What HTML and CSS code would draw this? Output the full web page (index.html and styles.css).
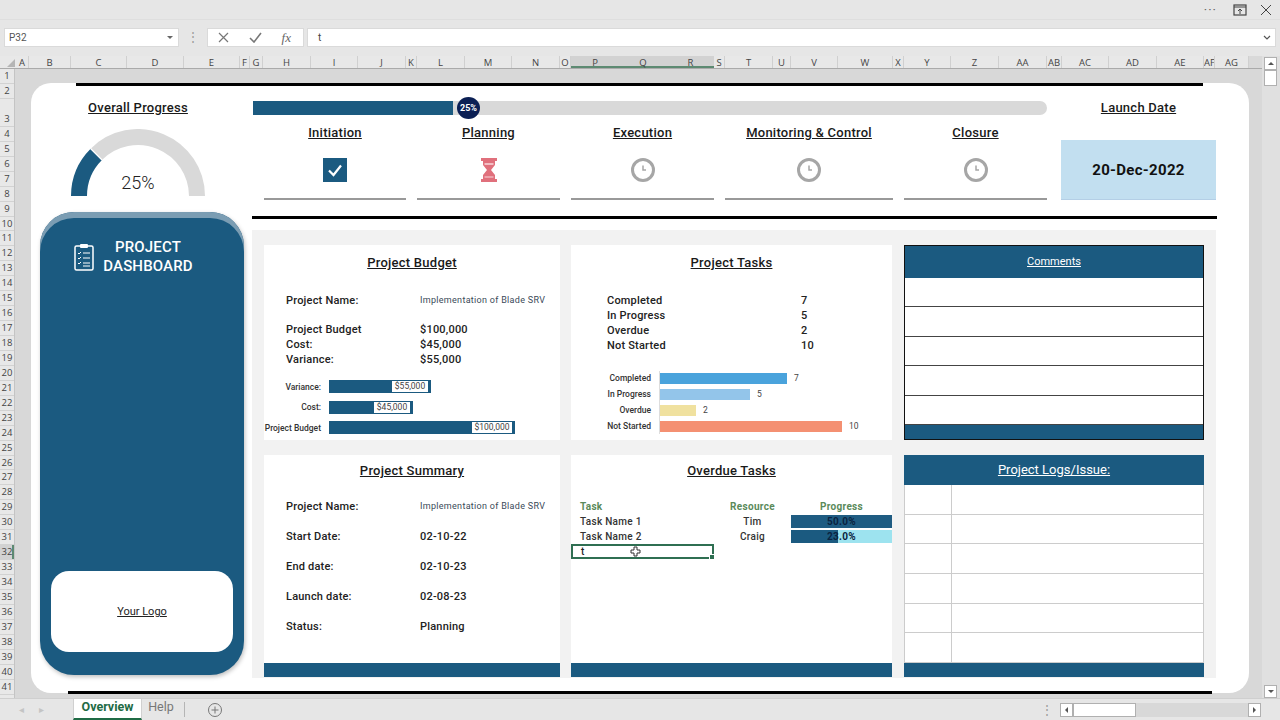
FILE: index.html
```html
<!DOCTYPE html>
<html lang="en">
<head>
    <meta charset="UTF-8">
    <title>Project Dashboard</title>
    <link rel="stylesheet" href="styles.css">
</head>
<body>
    <div class="titlebar">
        <span class="dots">&middot;&middot;&middot;</span>
        <svg class="win-icon" width="14" height="12" viewBox="0 0 14 12"><rect x="1" y="1" width="12" height="10" fill="none" stroke="#444" stroke-width="1.2"/><path d="M1 3h12M7 5v5M5 7l2-2 2 2" fill="none" stroke="#444"/></svg>
        <svg class="win-icon" width="12" height="12" viewBox="0 0 12 12"><path d="M1 1l10 10M11 1L1 11" stroke="#444" fill="none"/></svg>
    </div>

    <div class="formula">
        <div class="namebox"><span>P32</span><i class="caret"></i></div>
        <span class="grip">&#8942;</span>
        <div class="fx-group">
            <svg width="11" height="11" viewBox="0 0 11 11"><path d="M1 1l9 9M10 1l-9 9" stroke="#777" stroke-width="1.2" fill="none"/></svg>
            <svg width="13" height="11" viewBox="0 0 13 11"><path d="M1 6l4 4 7-9" stroke="#777" stroke-width="1.6" fill="none"/></svg>
            <span class="fx">fx</span>
        </div>
        <div class="formula-input"><span>t</span><svg width="8" height="5" viewBox="0 0 8 5"><path d="M1 1l3 3 3-3" stroke="#555" stroke-width="1.2" fill="none"/></svg></div>
    </div>

    <div class="main">
        <div class="grid-area">
            <div class="colhead">
                <span class="corner"></span>
                <span>A</span><span>B</span><span>C</span><span>D</span><span>E</span><span>F</span><span>G</span><span>H</span><span>I</span><span>J</span><span>K</span><span>L</span><span>M</span><span>N</span><span>O</span>
                <span class="sel">P</span><span class="sel">Q</span><span class="sel">R</span>
                <span>S</span><span>T</span><span>U</span><span>V</span><span>W</span><span>X</span><span>Y</span><span>Z</span><span>AA</span><span>AB</span><span>AC</span><span>AD</span><span>AE</span><span>AF</span><span>AG</span>
                <span class="colfill"></span>
            </div>
            <div class="sheet">
                <div class="rowhead">
                    <span>1</span><span>2</span><span class="tall">3</span><span>4</span><span>5</span><span>6</span><span>7</span><span>8</span><span>9</span><span>10</span>
                    <span>11</span><span>12</span><span>13</span><span>14</span><span>15</span><span>16</span><span>17</span><span>18</span><span>19</span><span>20</span>
                    <span>21</span><span>22</span><span>23</span><span>24</span><span>25</span><span>26</span><span>27</span><span>28</span><span>29</span><span>30</span>
                    <span>31</span><span class="sel">32</span><span>33</span><span>34</span><span>35</span><span>36</span><span>37</span><span>38</span><span>39</span><span>40</span>
                    <span>41</span>
                </div>
                <div class="gutter">
                    <div class="card">
                        <div class="rule-top"></div>
                        <div class="board">
                            <div class="left">
                                <div class="heading overall">Overall Progress</div>
                                <svg class="gauge" width="136" height="68" viewBox="0 0 136 68">
                                    <path d="M26.3 25.3A59 59 0 0 1 127 67" fill="none" stroke="#d9d9d9" stroke-width="16"/>
                                    <path d="M9 67A59 59 0 0 1 26.3 25.3" fill="none" stroke="#1b5a80" stroke-width="16"/>
                                    <path d="M20.5 19.5L32 31" stroke="#fff" stroke-width="1.2"/>
                                    <text x="68" y="60" text-anchor="middle" class="gauge-text">25%</text>
                                </svg>
                                <div class="side">
                                    <div class="side-head">
                                        <svg width="20" height="28" viewBox="0 0 20 28"><rect x="1" y="3" width="18" height="24" rx="1.5" fill="none" stroke="#fff" stroke-width="1.5"/><rect x="6" y="1" width="8" height="4" rx="1" fill="#fff"/><path d="M4 10l1 1 2-2M4 15l1 1 2-2M4 20l1 1 2-2M9 10h7M9 15h7M9 20h7M9 23h7" stroke="#fff" fill="none"/></svg>
                                        <div class="side-title">PROJECT<br>DASHBOARD</div>
                                    </div>
                                    <div class="logo-box"><u>Your Logo</u></div>
                                </div>
                            </div>

                            <div class="right">
                                <div class="top">
                                    <div class="phases">
                                        <div class="track">
                                            <div class="track-fill" style="width:200px"></div>
                                            <span class="knob">25%</span>
                                        </div>
                                        <div class="stages">
                                            <div class="stage">
                                                <div class="heading">Initiation</div>
                                                <svg class="stage-icon" width="24" height="24" viewBox="0 0 24 24"><rect width="24" height="24" fill="#1b5a80"/><path d="M6 12.5l4.5 4.5L18 7.5" stroke="#fff" stroke-width="2.2" fill="none"/></svg>
                                            </div>
                                            <div class="stage">
                                                <div class="heading">Planning</div>
                                                <svg class="stage-icon" width="18" height="24" viewBox="0 0 18 24"><path d="M1 1.5h16M1 22.5h16" stroke="#e0707c" stroke-width="3"/><path d="M3 3h12v4l-4 5 4 5v4H3v-4l4-5-4-5z" fill="#e0707c"/><path d="M4.5 6h9" stroke="#f8d8dc" stroke-width="1.5"/><path d="M4.5 19h9" stroke="#f8d8dc"/></svg>
                                            </div>
                                            <div class="stage">
                                                <div class="heading">Execution</div>
                                                <svg class="stage-icon" width="24" height="24" viewBox="0 0 24 24"><circle cx="12" cy="12" r="10.5" fill="#fff" stroke="#a6a6a6" stroke-width="3"/><path d="M12 7.5v4.500h3" stroke="#a6a6a6" stroke-width="1.5" fill="none"/></svg>
                                            </div>
                                            <div class="stage">
                                                <div class="heading">Monitoring &amp; Control</div>
                                                <svg class="stage-icon" width="24" height="24" viewBox="0 0 24 24"><circle cx="12" cy="12" r="10.5" fill="#fff" stroke="#a6a6a6" stroke-width="3"/><path d="M12 7.5v4.500h3" stroke="#a6a6a6" stroke-width="1.5" fill="none"/></svg>
                                            </div>
                                            <div class="stage">
                                                <div class="heading">Closure</div>
                                                <svg class="stage-icon" width="24" height="24" viewBox="0 0 24 24"><circle cx="12" cy="12" r="10.5" fill="#fff" stroke="#a6a6a6" stroke-width="3"/><path d="M12 7.5v4.500h3" stroke="#a6a6a6" stroke-width="1.5" fill="none"/></svg>
                                            </div>
                                        </div>
                                    </div>
                                    <div class="launch">
                                        <div class="heading">Launch Date</div>
                                        <div class="launch-date">20-Dec-2022</div>
                                    </div>
                                </div>
                                <div class="rule-mid"></div>

                                <div class="panel">
                                    <div class="box">
                                        <div class="heading">Project Budget</div>
                                        <div class="info budget-info">
                                            <span>Project Name:</span><span class="small">Implementation of Blade SRV</span>
                                        </div>
                                        <div class="info budget-info gap-top">
                                            <span>Project Budget</span><span>$100,000</span>
                                            <span>Cost:</span><span>$45,000</span>
                                            <span>Variance:</span><span>$55,000</span>
                                        </div>
                                        <div class="money-chart">
                                            <div class="money-row"><span class="chart-label">Variance:</span><div class="money-bar" style="width:102px"><span class="money-val">$55,000</span></div></div>
                                            <div class="money-row"><span class="chart-label">Cost:</span><div class="money-bar" style="width:84px"><span class="money-val">$45,000</span></div></div>
                                            <div class="money-row"><span class="chart-label">Project Budget</span><div class="money-bar" style="width:186px"><span class="money-val wide">$100,000</span></div></div>
                                        </div>
                                    </div>

                                    <div class="box">
                                        <div class="heading">Project Tasks</div>
                                        <div class="info tasks-info">
                                            <span>Completed</span><span>7</span>
                                            <span>In Progress</span><span>5</span>
                                            <span>Overdue</span><span>2</span>
                                            <span>Not Started</span><span>10</span>
                                        </div>
                                        <div class="task-chart">
                                            <div class="task-row"><span class="chart-label">Completed</span><div class="task-track"><i class="c-done" style="width:127px"></i><span>7</span></div></div>
                                            <div class="task-row"><span class="chart-label">In Progress</span><div class="task-track"><i class="c-prog" style="width:90px"></i><span>5</span></div></div>
                                            <div class="task-row"><span class="chart-label">Overdue</span><div class="task-track"><i class="c-over" style="width:36px"></i><span>2</span></div></div>
                                            <div class="task-row"><span class="chart-label">Not Started</span><div class="task-track"><i class="c-none" style="width:182px"></i><span>10</span></div></div>
                                        </div>
                                    </div>

                                    <div class="box comments">
                                        <div class="comments-head"><u>Comments</u></div>
                                        <div class="comment-line"></div>
                                        <div class="comment-line"></div>
                                        <div class="comment-line"></div>
                                        <div class="comment-line"></div>
                                        <div class="comment-line"></div>
                                        <div class="foot"></div>
                                    </div>

                                    <div class="box lower">
                                        <div class="heading">Project Summary</div>
                                        <div class="info summary-info">
                                            <span>Project Name:</span><span class="small">Implementation of Blade SRV</span>
                                            <span>Start Date:</span><span>02-10-22</span>
                                            <span>End date:</span><span>02-10-23</span>
                                            <span>Launch date:</span><span>02-08-23</span>
                                            <span>Status:</span><span>Planning</span>
                                        </div>
                                        <div class="foot"></div>
                                    </div>

                                    <div class="box lower">
                                        <div class="heading">Overdue Tasks</div>
                                        <div class="overdue">
                                            <span class="th task-col">Task</span><span class="th mid-col">Resource</span><span class="th mid-col">Progress</span>
                                            <span class="td task-col">Task Name 1</span><span class="td mid-col">Tim</span>
                                            <div class="pbar full"><span>50.0%</span></div>
                                            <span class="td task-col">Task Name 2</span><span class="td mid-col">Craig</span>
                                            <div class="pbar"><i style="width:47%"></i><span>23.0%</span></div>
                                            <div class="cell-sel">t
                                                <svg class="cross" width="11" height="11" viewBox="0 0 11 11"><path d="M4 1h3v3h3v3H7v3H4V7H1V4h3z" fill="#fff" stroke="#333"/></svg>
                                            </div>
                                        </div>
                                        <div class="foot"></div>
                                    </div>

                                    <div class="box lower logs">
                                        <div class="logs-head"><u>Project Logs/Issue:</u></div>
                                        <div class="log-line"><i></i></div>
                                        <div class="log-line"><i></i></div>
                                        <div class="log-line"><i></i></div>
                                        <div class="log-line"><i></i></div>
                                        <div class="log-line"><i></i></div>
                                        <div class="log-line"><i></i></div>
                                        <div class="foot"></div>
                                    </div>
                                </div>
                            </div>
                        </div>
                        <div class="rule-bottom"></div>
                    </div>
                </div>
            </div>
        </div>
        <div class="vscroll">
            <span class="sb-btn"><i class="tri-up"></i></span>
            <span class="sb-thumb"></span>
            <span class="sb-btn low"><i class="tri-down"></i></span>
        </div>
    </div>

    <div class="tabs">
        <span class="tab-arrow">&#9666;</span>
        <span class="tab-arrow">&#9656;</span>
        <span class="tab active">Overview</span>
        <span class="tab">Help</span>
        <span class="tab-sep"></span>
        <svg class="tab-add" width="16" height="16" viewBox="0 0 16 16"><circle cx="8" cy="8" r="6.5" fill="none" stroke="#777"/><path d="M8 4.5v7M4.5 8h7" stroke="#777"/></svg>
        <span class="tab-grip">&#8942;</span>
        <div class="hscroll">
            <span class="sb-btn"><i class="tri-left"></i></span>
            <span class="h-thumb"></span>
            <span class="h-track"></span>
            <span class="sb-btn"><i class="tri-right"></i></span>
        </div>
    </div>
</body>
</html>
```

FILE: styles.css
```css
* {
    box-sizing: border-box;
}
body {
    margin: 0;
    width: 1280px;
    height: 720px;
    overflow: hidden;
    background: #e6e6e6;
    font-family: Roboto, "Liberation Sans", sans-serif;
    color: #222;
}

/* window chrome */
.titlebar {
    height: 19px;
    display: flex;
    align-items: center;
    justify-content: flex-end;
    gap: 13px;
    padding-right: 8px;
}
.dots {
    font-size: 13px;
    color: #666;
    letter-spacing: 1px;
    margin-right: 3px;
}
.formula {
    height: 37px;
    padding: 8px 4px 0;
    display: flex;
    align-items: flex-start;
    border-top: 1px solid #dedede;
}
.namebox {
    width: 175px;
    height: 19px;
    background: #fff;
    border: 1px solid #dadada;
    display: flex;
    align-items: center;
    justify-content: space-between;
    padding: 0 5px 0 4px;
    font-size: 10px;
    color: #555;
}
.caret {
    border: 3px solid transparent;
    border-top-color: #666;
    border-bottom: 0;
}
.grip {
    width: 28px;
    text-align: center;
    color: #999;
    font-size: 12px;
    line-height: 19px;
}
.fx-group {
    width: 97px;
    height: 19px;
    background: #fff;
    border: 1px solid #dadada;
    display: flex;
    align-items: center;
    justify-content: space-between;
    padding: 0 12px 0 10px;
}
.fx {
    font-family: "Liberation Serif", serif;
    font-style: italic;
    font-size: 13px;
    color: #666;
}
.formula-input {
    flex: 1;
    height: 19px;
    margin-left: 3px;
    background: #fff;
    border: 1px solid #dadada;
    display: flex;
    align-items: center;
    justify-content: space-between;
    padding: 0 4px 0 10px;
    font-size: 10px;
    color: #444;
}

.main {
    height: 642px;
    display: flex;
}
.grid-area {
    width: 1262px;
}
.colhead {
    height: 13px;
    display: grid;
    grid-template-columns: 16px 13px 42px 56px 57px 56px 10px 13px 48px 47px 48px 11px 48px 47px 48px 11px 48px 48px 47px 11px 48px 18px 47px 55px 11px 47px 48px 48px 15px 47px 48px 47px 11px 34px 13px;
    border-bottom: 1px solid #aaa;
    background: #e8e8e8;
    font-family: "Open Sans", sans-serif;
    font-size: 9.5px;
    color: #444;
}
.colhead span {
    text-align: center;
    line-height: 13px;
    overflow: hidden;
    border-right: 1px solid #d0d0d0;
}
.colhead .sel {
    background: #d2d2d2;
    border-right: 0;
    box-shadow: inset 0 -2px 0 #5d8a72;
}
.colhead .corner {
    border: 0;
    position: relative;
}
.corner::after {
    content: "";
    position: absolute;
    right: 1px;
    bottom: 1px;
    border: 4px solid transparent;
    border-right-color: #b5b5b5;
    border-bottom-color: #b5b5b5;
}
.colhead .colfill {
    border: 0;
    background: #d9d9d9;
}
.sheet {
    height: 629px;
    display: flex;
    overflow: hidden;
}
.rowhead {
    width: 15px;
    flex: none;
    font-family: "Open Sans", sans-serif;
    font-size: 9.5px;
    color: #444;
    background: #e8e8e8;
    border-right: 1px solid #c4c4c4;
}
.rowhead span {
    display: block;
    height: 14.95px;
    line-height: 14.5px;
    text-align: center;
    border-bottom: 1px solid #d2d2d2;
}
.rowhead .tall {
    height: 28px;
    line-height: 39px;
}
.rowhead .sel {
    background: #d2d2d2;
    box-shadow: inset -2px 0 0 #5d8a72;
}
.gutter {
    flex: 1;
    background: #d8d8d8;
    padding: 14px 13px 0 16px;
    border-right: 1px solid #bbb;
}

/* the dashboard itself */
.card {
    width: 1218px;
    height: 610px;
    background: #fff;
    border-radius: 20px;
}
.rule-top {
    height: 3px;
    margin: 0 46px 0 45px;
    background: #000;
}
.rule-bottom {
    height: 3px;
    margin: 0 37px;
    background: #000;
}
.board {
    height: 605px;
    padding-left: 9px;
    display: flex;
    gap: 8px;
}
.heading {
    padding-top: 1px;
    font-size: 13px;
    font-weight: 500;
    line-height: 18px;
    letter-spacing: 0.25px;
    text-align: center;
    text-decoration: underline;
    color: #1a1a1a;
}
.lower .heading {
    padding-top: 0;
}
.left {
    width: 204px;
}
.overall {
    margin-top: 12px;
    padding-right: 8px;
}
.gauge {
    display: block;
    margin: 12px 0 0 30px;
}
.gauge-text {
    font-size: 18px;
    font-weight: 300;
    fill: #222;
}
.side {
    margin-top: 15px;
    height: 463px;
    background: #1b5a80;
    border-radius: 34px;
    box-shadow: inset 0 6px 0 #7b9db3, 1px 2px 4px rgba(0,0,0,0.25);
    display: flex;
    flex-direction: column;
}
.side-head {
    padding: 26px 0 0 34px;
    display: flex;
    align-items: center;
    gap: 8px;
}
.side-title {
    width: 92px;
    color: #fff;
    text-align: center;
    font-size: 15px;
    font-weight: 500;
    line-height: 18.5px;
    letter-spacing: 0.15px;
}
.logo-box {
    margin: auto 11px 23px;
    height: 81px;
    background: #fff;
    border-radius: 18px;
    display: flex;
    align-items: center;
    justify-content: center;
    font-size: 11px;
}

.right {
    width: 965px;
}
.top {
    display: grid;
    grid-template-columns: 795px 155px;
    column-gap: 14px;
}
.phases {
    padding-top: 15px;
}
.track {
    position: relative;
    height: 14px;
    margin-left: 1px;
    background: #d9d9d9;
    border-radius: 0 7px 7px 0;
}
.track-fill {
    height: 14px;
    background: #1b5a80;
}
.knob {
    position: absolute;
    left: 204px;
    top: -4px;
    width: 23px;
    height: 22px;
    border-radius: 50%;
    background: #0b1f54;
    color: #fff;
    font-size: 9px;
    font-weight: 700;
    line-height: 22px;
    text-align: center;
}
.stages {
    margin-top: 8px;
    padding-left: 12px;
    display: grid;
    grid-template-columns: 142px 143px 143px 168px 143px;
    column-gap: 11px;
}
.stage {
    height: 77px;
    border-bottom: 2px solid #999;
    text-align: center;
}
.stage-icon {
    display: block;
    margin: 16px auto 0;
}
.launch {
    padding-top: 12px;
}
.launch-date {
    margin-top: 23px;
    height: 60px;
    background: #c2dff0;
    border-bottom: 1px solid #b4cfe6;
    font-size: 15px;
    font-weight: 700;
    letter-spacing: 0.3px;
    line-height: 60px;
    text-align: center;
    color: #111;
}
.rule-mid {
    height: 3px;
    margin-top: 16px;
    background: #000;
}
.panel {
    width: 964px;
    height: 448px;
    margin-top: 11px;
    padding: 15px 0 0 12px;
    background: #f2f2f2;
    display: grid;
    grid-template-columns: 296px 321px 301px;
    grid-template-rows: 195px 222px;
    column-gap: 11px;
    row-gap: 15px;
}
.box {
    background: #fff;
    padding-top: 8px;
    display: flex;
    flex-direction: column;
}
.box.lower {
    padding-top: 7px;
}
.info {
    display: grid;
    font-size: 11px;
    font-weight: 500;
    letter-spacing: 0.2px;
    line-height: 15px;
    color: #222;
}
.small {
    font-size: 9px;
    font-weight: 400;
    letter-spacing: 0.3px;
    color: #3a4a58;
}
.budget-info {
    grid-template-columns: 134px 1fr;
    padding-left: 22px;
    margin-top: 21px;
}
.budget-info.gap-top {
    margin-top: 14px;
}
.tasks-info {
    grid-template-columns: 194px 1fr;
    padding-left: 36px;
    margin-top: 21px;
}
.summary-info {
    grid-template-columns: 134px 1fr;
    grid-auto-rows: 30px;
    align-items: center;
    padding-left: 22px;
    margin-top: 11px;
}
.chart-label {
    font-size: 8.5px;
    font-weight: 500;
    text-align: right;
    color: #333;
}
.money-chart {
    margin-top: 13px;
    display: flex;
    flex-direction: column;
    gap: 7.5px;
}
.money-row {
    height: 13px;
    display: flex;
    align-items: center;
}
.money-row .chart-label {
    width: 57px;
    margin-right: 8px;
    white-space: nowrap;
}
.money-bar {
    height: 13px;
    padding: 1px 3px 1px 0;
    background: #1b5a80;
    display: flex;
    justify-content: flex-end;
}
.money-val {
    width: 36px;
    background: #fff;
    font-size: 8.5px;
    line-height: 11px;
    text-align: center;
    color: #444;
}
.money-val.wide {
    width: 40px;
}
.task-chart {
    margin-top: 17.5px;
}
.task-row {
    height: 15.9px;
    display: flex;
    align-items: center;
}
.task-row .chart-label {
    width: 80px;
    margin-right: 8px;
}
.task-track {
    height: 100%;
    border-left: 1px solid #ddd;
    display: flex;
    align-items: center;
    gap: 7px;
    font-size: 8.5px;
    color: #444;
}
.task-track i {
    display: block;
    height: 11px;
}
.c-done { background: #4aa3dc; }
.c-prog { background: #93c5ea; }
.c-over { background: #f0e19f; }
.c-none { background: #f49072; }

.comments {
    margin-left: 1px;
    padding-top: 0;
    border: 1px solid #111;
}
.comments-head {
    height: 32px;
    background: #1b5a80;
    color: #fff;
    font-size: 11px;
    line-height: 32px;
    text-align: center;
}
.comment-line {
    flex: 1;
    border-bottom: 1px solid #444;
}
.foot {
    height: 14px;
    margin-top: auto;
    background: #1b5a80;
    flex: none;
}
.overdue {
    display: grid;
    grid-template-columns: 143px 77px 101px;
    grid-auto-rows: 15px;
    margin-top: 19px;
    align-items: center;
    font-size: 10px;
    font-weight: 500;
    letter-spacing: 0.3px;
}
.th {
    color: #5a8a5a;
    font-weight: 700;
}
.td {
    color: #333;
}
.task-col {
    padding-left: 9px;
}
.mid-col {
    text-align: center;
}
.pbar {
    position: relative;
    height: 13px;
    background: #9de3ef;
    text-align: center;
    line-height: 13px;
    font-weight: 700;
    color: #0a2340;
}
.pbar.full {
    background: #1f5c82;
}
.pbar i {
    position: absolute;
    left: 0;
    top: 0;
    bottom: 0;
    background: #1b5a80;
}
.pbar span {
    position: relative;
}
.cell-sel {
    position: relative;
    grid-column: 1;
    height: 15px;
    border: 2px solid #2f6f52;
    padding-left: 8px;
    line-height: 11px;
    color: #222;
}
.cell-sel::after {
    content: "";
    position: absolute;
    right: -3px;
    bottom: -3px;
    width: 4px;
    height: 4px;
    background: #2f6f52;
    border: 1px solid #fff;
}
.cross {
    position: absolute;
    left: 57px;
    top: 0;
}
.box.logs {
    margin-left: 1px;
    padding-top: 0;
}
.logs-head {
    height: 30px;
    flex: none;
    background: #1b5a80;
    color: #fff;
    font-size: 13px;
    line-height: 30px;
    text-align: center;
}
.log-line {
    flex: 1;
    border-left: 1px solid #ccc;
    border-right: 1px solid #ccc;
    border-bottom: 1px solid #ccc;
    padding-left: 46px;
}
.log-line i {
    display: block;
    height: 100%;
    border-left: 1px solid #ccc;
}

/* scrollbars and tabs */
.vscroll {
    width: 18px;
    background: #e0e0e0;
    padding: 1px 3px 0 2px;
    display: flex;
    flex-direction: column;
}
.sb-btn {
    width: 13px;
    height: 13px;
    flex: none;
    background: #fff;
    border: 1px solid #b0b0b0;
    display: flex;
    align-items: center;
    justify-content: center;
}
.vscroll .low {
    margin-top: auto;
}
.sb-thumb {
    height: 16px;
    background: #fff;
    border: 1px solid #b0b0b0;
}
.tri-up, .tri-down, .tri-left, .tri-right {
    display: block;
    border: 3px solid transparent;
}
.tri-up { border-bottom-color: #555; border-top: 0; }
.tri-down { border-top-color: #555; border-bottom: 0; }
.tri-left { border-right-color: #555; border-left: 0; }
.tri-right { border-left-color: #555; border-right: 0; }
.tabs {
    height: 22px;
    display: flex;
    align-items: center;
    padding-left: 11px;
    border-top: 1px solid #cfcfcf;
    font-size: 12.5px;
}
.tab-arrow {
    width: 20px;
    text-align: center;
    font-size: 10px;
    color: #c4c4c4;
}
.tab-arrow + .tab-arrow {
    margin-right: 22px;
}
.tab {
    height: 21px;
    width: 32px;
    line-height: 15px;
    color: #777;
    text-align: center;
}
.tab.active {
    width: 69px;
    margin-right: 3px;
    background: #fff;
    color: #1f6b45;
    font-weight: 700;
    border-left: 1px solid #d0d0d0;
    border-right: 1px solid #d0d0d0;
    border-bottom: 2px solid #1f6b45;
}
.tab-sep {
    width: 1px;
    height: 15px;
    margin-left: 7px;
    background: #b5b5b5;
}
.tab-add {
    margin-left: 22px;
}
.tab-grip {
    margin-left: 818px;
    color: #999;
    font-size: 12px;
}
.hscroll {
    margin-left: 7px;
    display: flex;
    width: 201px;
    height: 14px;
}
.hscroll .sb-btn {
    height: 14px;
}
.h-thumb {
    width: 63px;
    background: #fff;
    border: 1px solid #b0b0b0;
}
.h-track {
    flex: 1;
    background: #d8d8d8;
}
```
